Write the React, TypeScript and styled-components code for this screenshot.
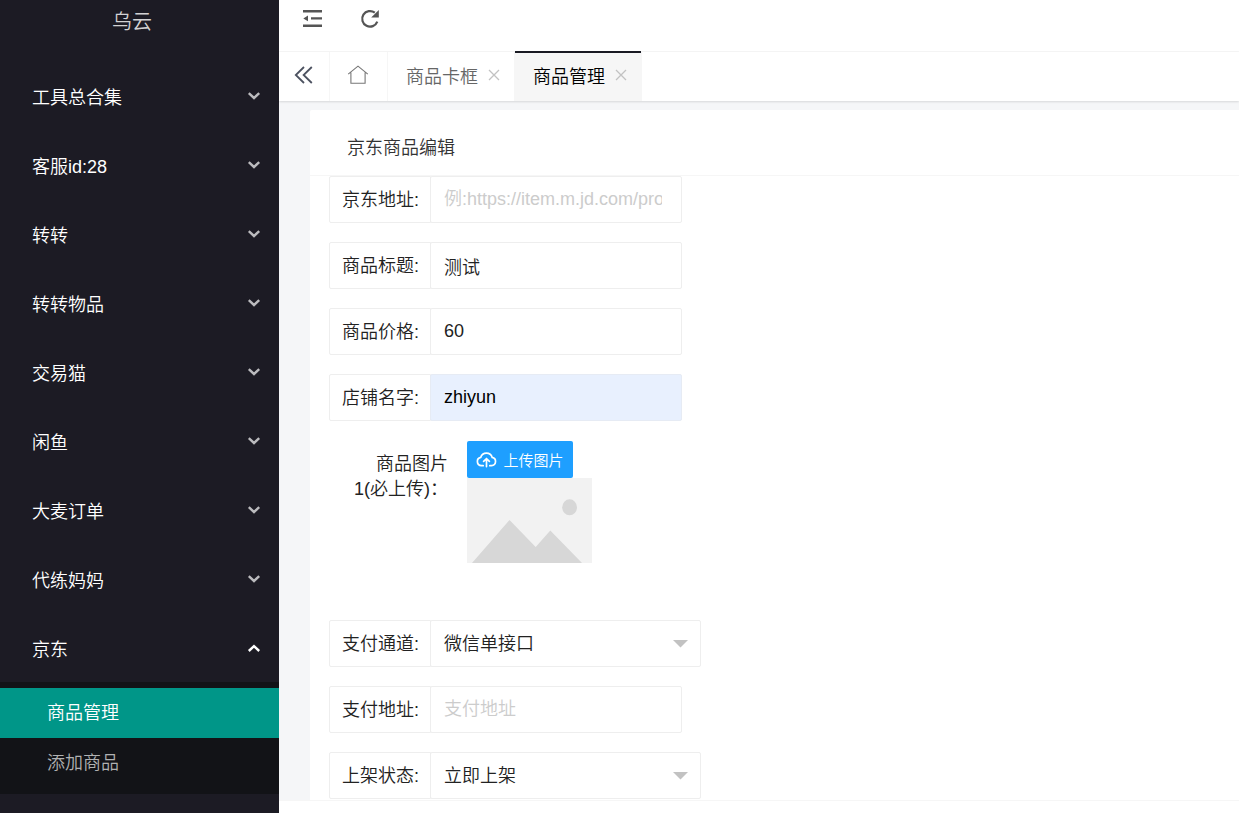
import React from 'react';
import styled, { createGlobalStyle } from 'styled-components';

const GlobalStyle = createGlobalStyle`
  *, *::before, *::after { box-sizing: border-box; }
  body { margin: 0; background: #fff; }
  body, button, input, select {
    font-family: "Liberation Sans", "Noto Sans CJK SC", sans-serif;
    font-size: 18px;
    font-weight: 350;
  }
  button { cursor: pointer; }
  ul { list-style: none; margin: 0; padding: 0; }
  svg { display: block; flex: none; }
`;

const Layout = styled.div`
  display: grid;
  grid-template-columns: 279px minmax(0, 1fr);
  height: 100vh;
  overflow: hidden;
`;

const Sidebar = styled.aside`
  background: #1c1b24;
  overflow: hidden;
`;

const Logo = styled.div`
  height: 61px;
  padding-right: 15px;
  line-height: 44px;
  font-size: 20px;
  text-align: center;
  color: #d2d2d3;
`;

const MenuButton = styled.button`
  display: flex;
  align-items: center;
  justify-content: space-between;
  width: 100%;
  height: 69px;
  padding: 0 18px 0 32px;
  border: 0;
  background: none;
  color: #fff;
`;

const SubMenu = styled.ul`
  padding: 6px 0;
  background: #121317;
`;

const SubLink = styled.a<{ $active?: boolean }>`
  display: block;
  padding-left: 47px;
  line-height: 50px;
  text-decoration: none;
  color: ${p => (p.$active ? '#fff' : '#b0b1b2')};
  background: ${p => (p.$active ? '#009688' : 'transparent')};
`;

const Main = styled.div`
  display: flex;
  flex-direction: column;
  min-width: 0;
  height: 100vh;
`;

const TopBar = styled.header`
  display: flex;
  flex: none;
  align-items: flex-start;
  gap: 36px;
  height: 52px;
  padding: 8px 23px;
  border-bottom: 1px solid #f6f6f6;
`;

const IconButton = styled.button`
  padding: 0;
  border: 0;
  background: none;
  color: #555;
`;

const TabBar = styled.nav`
  position: relative;
  display: flex;
  flex: none;
  height: 49px;
  background: #fff;
  box-shadow: 0 1px 2px rgba(0, 0, 0, 0.12);
`;

const TabIcon = styled.button<{ $wide?: boolean }>`
  display: grid;
  place-items: center;
  width: ${p => (p.$wide ? '58px' : '51px')};
  padding: 0 2px 3px 0;
  border: 0;
  border-right: 1px solid #f6f6f6;
  background: none;
  color: ${p => (p.$wide ? '#777' : '#4c5260')};
`;

const Tab = styled.div<{ $active?: boolean }>`
  position: relative;
  display: flex;
  align-items: center;
  gap: 10px;
  padding: 0 14px 4px 18px;
  border-right: 1px solid #f6f6f6;
  background: ${p => (p.$active ? '#f6f6f6' : '#fff')};
  color: ${p => (p.$active ? '#000' : '#666')};

  &::before {
    content: '';
    display: ${p => (p.$active ? 'block' : 'none')};
    position: absolute;
    top: -1px;
    left: 0;
    right: 0;
    height: 2px;
    background: #191a23;
  }
`;

const TabLink = styled.a`
  color: inherit;
  text-decoration: none;
`;

const CloseButton = styled(IconButton)`
  color: #c2c2c2;
`;

const Body = styled.main`
  flex: 1;
  min-height: 0;
  padding: 9px 0 0 31px;
  overflow: hidden;
  background: #f5f6f8;
`;

const Card = styled.section`
  min-height: 100%;
  border-radius: 2px 0 0 0;
  background: #fff;
`;

const CardTitle = styled.h1`
  margin: 0;
  height: 66px;
  padding: 12px 37px 0;
  border-bottom: 1px solid #f6f6f6;
  font-size: 18px;
  font-weight: 350;
  line-height: 52px;
  color: #333;
`;

const Form = styled.form`
  display: flex;
  flex-direction: column;
  align-items: flex-start;
  gap: 19px;
  padding: 0 19px 19px;
`;

const Field = styled.div`
  display: flex;
  height: 47px;
`;

const FieldLabel = styled.label`
  width: 102px;
  padding: 0 12px;
  border: 1px solid #eee;
  border-radius: 2px 0 0 2px;
  line-height: 47px;
  white-space: nowrap;
  color: #222;
`;

const Input = styled.input<{ $filled?: boolean }>`
  width: 252px;
  margin-left: -1px;
  padding: 0 19px 0 13px;
  border: 1px solid ${p => (p.$filled ? '#e6ebf4' : '#eee')};
  border-radius: 2px;
  outline: 0;
  background: ${p => (p.$filled ? '#e8f0fe' : '#fff')};
  color: ${p => (p.$filled ? '#000' : '#222')};

  &::placeholder { color: #ccc; opacity: 1; }
`;

const SelectBox = styled.div`
  position: relative;
  width: 271px;
  margin-left: -1px;

  svg {
    position: absolute;
    top: 20px;
    right: 13px;
    pointer-events: none;
  }
`;

const Select = styled.select`
  appearance: none;
  width: 100%;
  height: 100%;
  padding: 0 38px 0 13px;
  border: 1px solid #eee;
  border-radius: 2px;
  outline: 0;
  background: #fff;
  color: #222;
`;

const UploadRow = styled.div`
  display: flex;
  min-height: 161px;
  padding-top: 1px;
`;

const UploadLabel = styled.span`
  width: 138px;
  padding: 11px 19px;
  line-height: 25px;
  text-align: right;
  color: #222;
`;

const UploadButton = styled.button`
  display: flex;
  align-items: center;
  justify-content: center;
  gap: 6px;
  width: 106px;
  height: 37px;
  padding: 0;
  border: 0;
  border-radius: 2px;
  background: #1e9fff;
  color: #fff;
  font-size: 15px;
  white-space: nowrap;
`;

const Footer = styled.footer`
  flex: none;
  height: 13px;
  border-top: 1px solid #f6f6f6;
  background: #fff;
`;

const Arrow = ({ up = false }: { up?: boolean }) => (
  <svg width="14" height="14" viewBox="0 0 14 14" fill="none" stroke={up ? '#fff' : '#bbbbbe'} strokeWidth="2.4">
    <path d={up ? 'M1.8 10 7 5.2l5.2 4.8' : 'M1.8 4.2 7 9l5.2-4.8'} />
  </svg>
);

const CollapseIcon = () => (
  <svg width="21" height="21" viewBox="0 0 21 21" fill="currentColor">
    <path d="M1 2h19v2.4H1zM9 9.2h11v2.4H9zM1 16.5h19v2.4H1zM1.3 10.4 6 7.6v5.6z" />
  </svg>
);

const RefreshIcon = () => (
  <svg width="22" height="22" viewBox="0 0 22 22">
    <path d="M18.3 13.6A7.8 7.8 0 1 1 15.8 4.7" fill="none" stroke="currentColor" strokeWidth="2.2" />
    <path d="M19.8 2v7.4h-7.6z" fill="currentColor" />
  </svg>
);

const DoubleLeftIcon = () => (
  <svg width="20" height="20" viewBox="0 0 20 20" fill="none" stroke="currentColor" strokeWidth="1.8">
    <path d="M11 2 2.8 10l8.2 8M18.8 2 10.6 10l8.2 8" />
  </svg>
);

const HomeIcon = () => (
  <svg width="22" height="22" viewBox="0 0 22 22" fill="none" stroke="currentColor" strokeWidth="1.1">
    <path d="M1.2 10.1 11 2.1l9.8 8M3.9 8.4v10.8h14.2V8.4" />
  </svg>
);

const CloseIcon = () => (
  <svg width="12" height="12" viewBox="0 0 12 12" fill="none" stroke="currentColor" strokeWidth="1.3">
    <path d="m1 1 10 10M11 1 1 11" />
  </svg>
);

const CloudIcon = () => (
  <svg width="21" height="16" viewBox="0 0 21 16" fill="none" stroke="currentColor" strokeWidth="1.7" strokeLinecap="round">
    <path d="M7.2 13.7H5.4a4.2 4.2 0 0 1-.7-8.3 6 6 0 0 1 11.5 0 4.2 4.2 0 0 1-.6 8.3h-1.8M10.5 14.6V7M7.6 9.4l2.9-2.8 2.9 2.8" />
  </svg>
);

const Caret = () => (
  <svg width="15" height="8" viewBox="0 0 15 8">
    <path d="M0 0h15L7.5 7.6z" fill="#c2c2c2" />
  </svg>
);

const Placeholder = () => (
  <svg width="125" height="85" viewBox="0 0 125 85" role="img" aria-label="商品图片">
    <path d="M0 0h125v85H0z" fill="#f2f2f2" />
    <path d="m5 85 37.5-43L68.7 69l14.6-16.4L115 85z" fill="#d7d7d7" />
    <ellipse cx="102.6" cy="29.3" rx="7.4" ry="8" fill="#d7d7d7" />
  </svg>
);

const MENU = ['工具总合集', '客服id:28', '转转', '转转物品', '交易猫', '闲鱼', '大麦订单', '代练妈妈'];

type TextFieldProps = { id: string; label: string; value?: string; placeholder?: string; filled?: boolean };

const TextField = ({ id, label, value, placeholder, filled }: TextFieldProps) => (
  <Field>
    <FieldLabel htmlFor={id}>{label}</FieldLabel>
    <Input id={id} defaultValue={value} placeholder={placeholder} $filled={filled} />
  </Field>
);

const SelectField = ({ id, label, option }: { id: string; label: string; option: string }) => (
  <Field>
    <FieldLabel htmlFor={id}>{label}</FieldLabel>
    <SelectBox>
      <Select id={id}>
        <option>{option}</option>
      </Select>
      <Caret />
    </SelectBox>
  </Field>
);

export default function App() {
  return (
    <>
      <GlobalStyle />
      <Layout>
        <Sidebar>
          <Logo>乌云</Logo>
          <ul>
            {MENU.map(name => (
              <li key={name}>
                <MenuButton type="button">{name}<Arrow /></MenuButton>
              </li>
            ))}
            <li>
              <MenuButton type="button" aria-expanded="true">京东<Arrow up /></MenuButton>
              <SubMenu>
                <li><SubLink href="#manage" $active>商品管理</SubLink></li>
                <li><SubLink href="#add">添加商品</SubLink></li>
              </SubMenu>
            </li>
          </ul>
        </Sidebar>
        <Main>
          <TopBar>
            <IconButton type="button" aria-label="收起菜单"><CollapseIcon /></IconButton>
            <IconButton type="button" aria-label="刷新"><RefreshIcon /></IconButton>
          </TopBar>
          <TabBar>
            <TabIcon type="button" aria-label="向左"><DoubleLeftIcon /></TabIcon>
            <TabIcon type="button" aria-label="主页" $wide><HomeIcon /></TabIcon>
            <Tab>
              <TabLink href="#card">商品卡框</TabLink>
              <CloseButton type="button" aria-label="关闭"><CloseIcon /></CloseButton>
            </Tab>
            <Tab $active>
              <TabLink href="#manage">商品管理</TabLink>
              <CloseButton type="button" aria-label="关闭"><CloseIcon /></CloseButton>
            </Tab>
          </TabBar>
          <Body>
            <Card>
              <CardTitle>京东商品编辑</CardTitle>
              <Form>
                <TextField id="url" label="京东地址:" placeholder="例:https://item.m.jd.com/product/" />
                <TextField id="title" label="商品标题:" value="测试" />
                <TextField id="price" label="商品价格:" value="60" />
                <TextField id="shop" label="店铺名字:" value="zhiyun" filled />
                <UploadRow>
                  <UploadLabel>商品图片1(必上传)：</UploadLabel>
                  <div>
                    <UploadButton type="button"><CloudIcon />上传图片</UploadButton>
                    <Placeholder />
                  </div>
                </UploadRow>
                <SelectField id="channel" label="支付通道:" option="微信单接口" />
                <TextField id="pay" label="支付地址:" placeholder="支付地址" />
                <SelectField id="status" label="上架状态:" option="立即上架" />
              </Form>
            </Card>
          </Body>
          <Footer />
        </Main>
      </Layout>
    </>
  );
}
